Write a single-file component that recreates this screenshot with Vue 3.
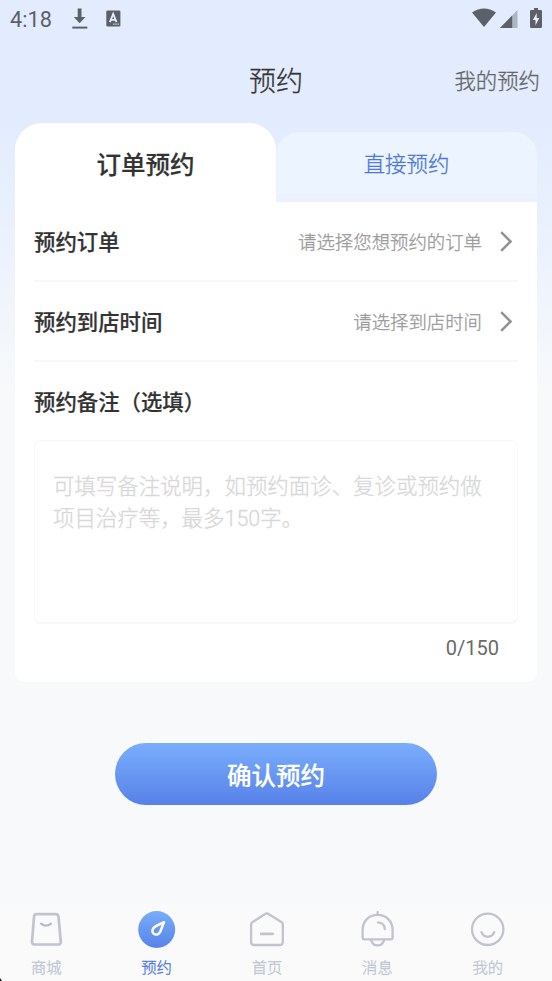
<script setup>
import { ref } from 'vue'

const note = ref('')
const rows = [
  { label: '预约订单', hint: '请选择您想预约的订单' },
  { label: '预约到店时间', hint: '请选择到店时间' },
]
const tabs = [
  { id: 'shop', text: '商城' },
  { id: 'book', text: '预约', active: true },
  { id: 'home', text: '首页' },
  { id: 'news', text: '消息' },
  { id: 'mine', text: '我的' },
]
</script>

<template>
  <div class="page">
    <div class="status">
      <span class="clock">4:18</span>
      <svg class="download" width="16" height="22" viewBox="0 0 16 22">
        <path d="M5.7 .5h3.8v8.5h4L7.6 15.2 1.8 9h3.9z" fill="#5c6068" />
        <path d="M.3 19.6h15" stroke="#5c6068" stroke-width="2" />
      </svg>
      <svg class="input-mode" width="15" height="17" viewBox="0 0 15 17">
        <rect x=".3" y=".4" width="14.1" height="16.2" rx="1.3" fill="#5c6068" />
        <path d="M3.9 12.2 7.2 4l3.3 8.2M5.1 9.8h4.2" fill="none" stroke="#e8effd" stroke-width="1.8" />
        <path d="M7.2 14.2h6" stroke="#e8effd" stroke-width="1.2" stroke-dasharray="1.2 1" />
      </svg>
      <span class="spacer"></span>
      <svg class="wifi" width="24" height="19" viewBox="0 0 24 19">
        <path d="M0 4.4Q12-3.3 24 4.4L12 19z" fill="#5c6068" />
      </svg>
      <svg class="signal" width="18" height="18" viewBox="0 0 18 18">
        <path d="M17.5 0v18H0z" fill="#adb5c2" />
        <path d="M12.2 5.5V18H0z" fill="#5c6068" />
      </svg>
      <svg class="battery" width="12" height="20" viewBox="0 0 12 20">
        <path d="M4 0h4v2h2.8q1.2 0 1.2 1.2v15.5q0 1.3-1.2 1.3H1.2Q0 20 0 18.7V3.2Q0 2 1.2 2H4z" fill="#5c6068" />
        <path d="M6.7 5 2.9 12h2.6v5.4L9.2 10H6.7z" fill="#e8effd" />
      </svg>
    </div>

    <header class="header">
      <h1>预约</h1>
      <a class="mine-link">我的预约</a>
    </header>

    <main class="content">
      <div class="switch">
        <div class="switch-on">订单预约</div>
        <div class="switch-off">直接预约</div>
      </div>
      <section class="card">
        <div v-for="r in rows" :key="r.label" class="row">
          <span class="label">{{ r.label }}</span>
          <span class="hint">{{ r.hint }}</span>
          <svg width="13" height="22" viewBox="0 0 13 22">
            <path d="M1.2 2.2 10.6 11.5 1.2 20.8" fill="none" stroke="#929292" stroke-width="2.5" />
          </svg>
        </div>
        <div class="label note-label">预约备注（选填）</div>
        <textarea v-model="note" class="note" placeholder="可填写备注说明，如预约面诊、复诊或预约做项目治疗等，最多150字。"></textarea>
        <div class="count">{{ note.length }}/150</div>
      </section>
      <button class="submit">确认预约</button>
    </main>

    <nav class="nav">
      <div v-for="t in tabs" :key="t.id" class="nav-item" :class="{ active: t.active }">
        <svg width="38" height="38" viewBox="0 0 38 38" fill="none" stroke="#c1c4d0" stroke-width="2.3" stroke-linecap="round" stroke-linejoin="round">
          <template v-if="t.id === 'shop'">
            <path stroke-width="2.7" d="M9.6 3.2H28.8Q31.2 3.2 31.5 6L33.8 30.5Q34 33.5 31 33.5H7.8Q4.8 33.5 5 30.5L7 6Q7.2 3.2 9.6 3.2Z" />
            <path stroke="#b1bbd0" d="M14 12.7Q19 16.6 24 12.7" />
          </template>
          <template v-else-if="t.id === 'book'">
            <defs>
              <linearGradient id="disc" x1="0" y1="0" x2="0" y2="1">
                <stop stop-color="#79adfa" /><stop offset="1" stop-color="#5783e8" />
              </linearGradient>
            </defs>
            <circle cx="18.7" cy="18.5" r="18.5" fill="url(#disc)" stroke="none" />
            <path stroke="#fff" stroke-width="2.5" d="M26 11.2 17.9 15.2C14 17.4 13.6 20.4 15.4 22.3C17.4 24.3 20.6 23.9 22 21.2Z" />
          </template>
          <template v-else-if="t.id === 'home'">
            <path d="M17.5 2.7Q18.8 1.8 20.1 2.7L33.8 11.3Q34.8 12 34.8 13.4V31Q34.8 34 31.8 34H5.8Q3.1 34 3.1 31V13.4Q3.1 12 4.2 11.3Z" />
            <path stroke-width="2.6" d="M13.1 22.9H24.8" />
          </template>
          <template v-else-if="t.id === 'news'">
            <path d="M19.6 1.1V3.6M4.6 19C4.6 10 10.9 3.9 19.6 3.9S34.6 10 34.6 19V26.6Q34.6 28.4 32.8 28.4H6.4Q4.6 28.4 4.6 26.6Z" />
            <path d="M13.2 29.4C15.1 36.1 24 36.1 26 29.4M20 11.4Q26.4 11.8 26.7 18" />
          </template>
          <template v-else>
            <circle cx="18.7" cy="18.3" r="15.7" />
            <path d="M12.5 21.2Q14.1 25.8 18.8 25.8T25.1 21.2" />
          </template>
        </svg>
        <span>{{ t.text }}</span>
      </div>
      <i class="corner"></i>
    </nav>
  </div>
</template>

<style>
body { margin: 0; }
</style>

<style scoped>
* { box-sizing: border-box; }
.page {
  height: 981px;
  display: flex;
  flex-direction: column;
  overflow: hidden;
  font-family: Roboto, "Noto Sans CJK SC", sans-serif;
  font-weight: 300;
  color: #333;
  background: linear-gradient(#e2ecfe 0, #e2ecfe 120px, #f7f9fb 390px, #f7f9fb 100%);
}
h1, .mine-link, .switch-off, .hint, .note::placeholder, .nav-item span { -webkit-text-stroke: .3px currentColor; }
.status { height: 38px; display: flex; align-items: flex-start; padding: 8px 10px 0 10px; }
.clock { width: 42px; font-size: 21.7px; font-weight: 400; line-height: 23px; color: #5c6068; }
.download { margin-left: 20px; }
.input-mode { margin: 2px 0 0 18px; }
.spacer { flex: 1; }
.signal { margin: 2px 0 0 4px; }
.battery { margin-left: 12px; }
.header {
  height: 85px;
  display: grid;
  grid-template-columns: 1fr auto 1fr;
  align-items: center;
  padding: 3px 12px 0;
}
h1 { grid-column: 2; margin: 0; font-size: 27px; font-weight: 300; line-height: 40px; }
.mine-link { justify-self: end; font-size: 21.4px; line-height: 32px; color: #666; }
.content { flex: 1; padding: 0 15px; display: flex; flex-direction: column; }
.switch { height: 79px; display: flex; align-items: flex-end; }
.switch-on, .switch-off { width: 261px; text-align: center; }
.switch-on { height: 79px; border-radius: 27px 27px 0 0; background: #fff; font-size: 24.5px; line-height: 85px; font-weight: 500; }
.switch-off {
  height: 70px;
  border-radius: 24px 24px 0 0;
  background: linear-gradient(#ecf5ff 0, #ecf5ff 61px, #ebf1fd 62px);
  font-size: 21.4px;
  line-height: 65px;
  color: #4d77d9;
}
.card { height: 480px; padding: 0 19px; border-radius: 0 0 10px 10px; background: #fff; }
.row { height: 80px; display: flex; align-items: center; border-bottom: 2px solid #f6f7f8; padding-right: 5px; }
.label { font-size: 21.4px; font-weight: 500; line-height: 32px; }
.label, .switch-on, .submit { -webkit-text-stroke: .2px currentColor; }
.row .label, .hint { padding-top: 4px; }
.hint { margin-left: auto; margin-right: 18px; font-size: 18.4px; line-height: 28px; color: #999; }
.note-label { padding-top: 25px; height: 78px; }
.note {
  display: block;
  width: 100%;
  height: 184px;
  padding: 30px 17px 0 18px;
  border: 1.5px solid #f6f7f8;
  border-bottom-width: 2px;
  border-radius: 7px;
  outline: 0;
  resize: none;
  overflow: hidden;
  background: #fff;
  font: 300 21.45px/32px Roboto, "Noto Sans CJK SC", sans-serif;
  color: #333;
}
.note::placeholder { color: #d8d8d8; opacity: 1; }
.count { padding: 9px 19px 0 0; text-align: right; font-size: 20px; font-weight: 400; line-height: 30px; color: #6a6a6a; }
.submit {
  align-self: center;
  width: 322px;
  height: 62px;
  margin-top: 61px;
  padding: 5px 0 0;
  border: 0;
  border-radius: 31px;
  background: linear-gradient(#7aaefc, #5681e8);
  font: 500 24.5px/36px Roboto, "Noto Sans CJK SC", sans-serif;
  color: #fff;
}
.nav { position: relative; height: 77px; display: flex; padding: 7px 9px 0 0; margin-left: -9px; background: #fafafa; }
.nav-item { flex: 1; display: flex; flex-direction: column; align-items: center; font-size: 15.3px; line-height: 24px; color: #bcc5d2; }
.nav-item span { margin-top: 7px; }
.active { color: #4d77d9; }
.corner { position: absolute; left: 9px; bottom: 0; width: 2px; height: 3px; background: #111; clip-path: polygon(0 0, 100% 100%, 0 100%); }
</style>
